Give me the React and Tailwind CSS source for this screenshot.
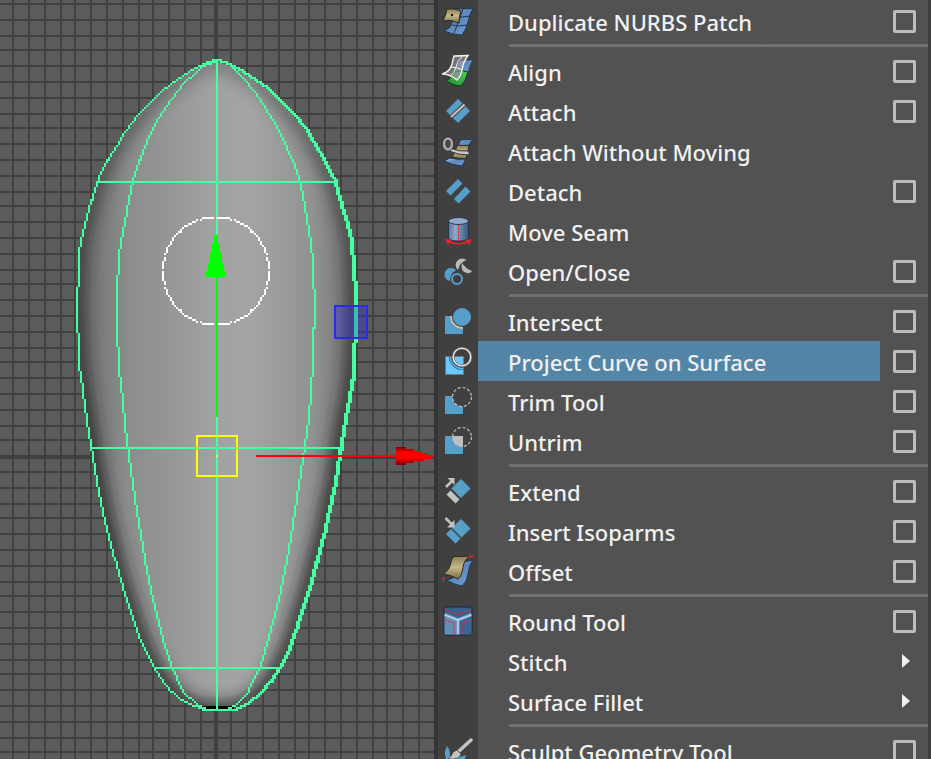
import React from "react";

const BLUE = "#559fc9";
const GREY = "#b9b9b9";
const WIRE = "#45ffa3";
const CELL = 2;

const LEFT_EDGE = [[216, 61], [210, 62], [200, 66], [190, 71], [182, 77], [170, 85], [160, 93], [148, 105], [139, 115], [125, 133], [118, 144], [108, 160], [98, 181], [92, 200], [85, 225], [81, 240], [79, 257], [78, 286], [77, 310], [78, 335], [79, 365], [82, 385], [86, 415], [91, 447], [95, 470], [100, 498], [107, 530], [115, 560], [122, 585], [131, 613], [139, 636], [146, 652], [154, 668], [162, 680], [171, 692], [180, 700], [192, 706], [202, 710], [216, 710]];
const RIGHT_EDGE = [[216, 61], [222, 63], [232, 67], [242, 72], [255, 81], [271, 92], [292, 114], [306, 131], [320, 155], [334, 181], [340, 203], [347, 225], [351, 242], [353, 270], [355, 297], [355, 325], [353, 360], [352, 380], [348, 403], [343, 430], [340, 450], [335, 483], [330, 504], [324, 532], [316, 562], [310, 585], [303, 606], [296, 628], [288, 650], [279, 668], [270, 682], [261, 693], [247, 705], [235, 710], [216, 710]];
const LEFT_ISO = [[216, 61], [208, 65], [200, 68], [190, 78], [180, 89], [167, 107], [155, 125], [147, 142], [140, 160], [133, 181], [129, 200], [123, 232], [119, 257], [117, 295], [117, 325], [119, 370], [122, 395], [125, 425], [128, 450], [131, 470], [135, 498], [140, 530], [145, 560], [153, 600], [163, 640], [172, 668], [183, 693], [196, 705], [206, 710]];
const RIGHT_ISO = [[216, 61], [226, 64], [232, 67], [243, 78], [255, 92], [273, 120], [281, 134], [292, 160], [300, 183], [304, 203], [309, 230], [312, 254], [314, 290], [314, 328], [312, 377], [309, 420], [305, 447], [301, 473], [297, 498], [292, 530], [287, 560], [279, 600], [268, 640], [260, 668], [248, 693], [237, 705], [228, 710]];
const RING = Array.from({ length: 73 }, (_, i) => {
  const a = (i * Math.PI) / 36;
  return [216 + 53 * Math.cos(a), 272 + 54 * Math.sin(a)];
});

// Rasterises a polyline on the viewport's coarse cell lattice.
function cells(points, width = CELL) {
  let d = "";
  for (let i = 1; i < points.length; i++) {
    const [x0, y0] = points[i - 1].map((v) => (v - 1) / CELL);
    const [x1, y1] = points[i].map((v) => (v - 1) / CELL);
    const n = Math.max(1, Math.round(Math.max(Math.abs(x1 - x0), Math.abs(y1 - y0))));
    for (let k = 0; k <= n; k++) {
      const x = Math.round(x0 + ((x1 - x0) * k) / n) * CELL;
      const y = Math.round(y0 + ((y1 - y0) * k) / n) * CELL - 1;
      d += `M${x} ${y}h${width}v${CELL}h${-width}z`;
    }
  }
  return d;
}

function gridPath() {
  let d = "";
  for (let i = -13; i <= 60; i++) {
    if (i !== 0) d += `M${2 * Math.floor((216.1 + 15.6 * i) / 2)} 0h2v1600h-2z`;
  }
  for (let j = 0; j <= 100; j++) {
    d += `M0 ${2 * Math.floor((5 + 15.6 * j) / 2) - 1}h1200v2h-1200z`;
  }
  return d;
}

const BODY = "M" + [...LEFT_EDGE, ...[...RIGHT_EDGE].reverse()].map((p) => p.join(" ")).join("L") + "Z";

function Viewport() {
  return (
    <svg viewBox="0 0 434 759" preserveAspectRatio="xMinYMin slice" className="block size-full" role="img" aria-label="NURBS surface in the front view">
      <defs>
        <linearGradient id="body" gradientUnits="userSpaceOnUse" x1="77" x2="356" y1="0" y2="0">
          <stop offset="0" stopColor="#6c6c6c" />
          <stop offset="0.180" stopColor="#8c8c8c" />
          <stop offset="0.5" stopColor="#a2a2a2" />
          <stop offset="0.62" stopColor="#a4a4a4" />
          <stop offset="0.84" stopColor="#929292" />
          <stop offset="1" stopColor="#747474" />
        </linearGradient>
        <linearGradient id="cone" x1="0" x2="0" y1="0" y2="1">
          <stop offset="0" stopColor="#7a0000" />
          <stop offset="0.3" stopColor="#f00" />
          <stop offset="0.6" stopColor="#f00" />
          <stop offset="1" stopColor="#700" />
        </linearGradient>
        <linearGradient id="fade" x1="0" x2="0" y1="0" y2="1">
          <stop offset="0" stopColor="#333" />
          <stop offset="0.2" stopColor="#888" />
          <stop offset="0.6" stopColor="#eee" />
        </linearGradient>
        <mask id="fadeMask" maskUnits="userSpaceOnUse" x="0" y="0" width="434" height="759">
          <rect width="434" height="759" fill="url(#fade)" />
        </mask>
        <clipPath id="bodyClip"><path d={BODY} /></clipPath>
        <filter id="soft" filterUnits="userSpaceOnUse" x="0" y="0" width="434" height="759"><feGaussianBlur stdDeviation="8" /></filter>
      </defs>
      <rect width="1200" height="1600" fill="#5b5b5b" />
      <g shapeRendering="crispEdges">
        <path d={gridPath()} fill="#414141" />
        <path d="M214 0h4v1600h-4zM0 455h1200v4h-1200z" fill="#404040" />
      </g>
      <path d={BODY} fill="url(#body)" />
      <g clipPath="url(#bodyClip)">
        <g mask="url(#fadeMask)">
          <path d={BODY} fill="none" stroke="#202020" strokeWidth="15" filter="url(#soft)" />
        </g>
        <path d="M200 706h34v4h-34z" fill="#000" />
      </g>
      <g shapeRendering="crispEdges">
        <path d={cells(LEFT_EDGE)} fill={WIRE} />
        <path d={cells(RIGHT_EDGE, 4)} fill={WIRE} />
        <path d={cells(LEFT_ISO)} fill={WIRE} />
        <path d={cells(RIGHT_ISO)} fill={WIRE} />
        <path d="M216 61h2v650h-2zM97 181h238v2H97zM91 447h251v2H91zM154 667h126v2H154z" fill={WIRE} />
        <path d={cells(RING)} fill="#fff" />
        <path d="M216 277h2v140h-2zM214 235h4v8h2v10h2v10h2v8h2v6h-20v-6h2v-8h2v-10h2v-10h2z" fill="#0f0" />
        <rect x="335" y="306" width="32" height="32" fill="#2222ff" fillOpacity="0.3" stroke="#2a2aee" strokeWidth="2" />
        <rect x="197" y="436" width="40" height="40" fill="none" stroke="#ff0" strokeWidth="2" />
        <rect x="216" y="455" width="2" height="2" fill="#ff0" />
        <path d="M256 455h142v2H256z" fill="#f00" />
        <path d="M396 447h10v2h8v2h8v2h6v2h7v2h-3v2h-8v2h-10v2h-8v2h-10z" fill="url(#cone)" />
      </g>
    </svg>
  );
}

const art = {
  duplicate: (
    <>
      <path d="M12 4Q22 4 31 3.500Q27 10 26 17Q24 25 20 30Q11 30 2 26Q8 24 10 18Z" fill="url(#sky)" stroke="#22374d" />
      <path d="M12 13Q20 12 28 11M10 20Q17 22 25 20M21 4Q18 14 12 28" fill="none" stroke="#22374d" />
      <path d="M5 4Q12 3 19 6Q17 11 17 18Q9 14 1 16Q4 10 5 4Z" fill="url(#gold)" stroke="#2c281c" />
      <circle cx="10" cy="10" r="1.200" fill="#17130a" />
    </>
  ),
  align: (
    <>
      <path d="M18 6Q25 5 31 5Q28 9 26 17H12Z" fill="url(#sky)" stroke="#22374d" strokeWidth="0.500" />
      <path d="M12 17Q20 14 26 17Q24 26 19 31Q12 31 4 26Q9 24 12 17Z" fill="url(#leaf)" stroke="#123d18" />
      <path d="M12 1Q18 1 26 0.500Q21 7 20 15Q19 21 15 25Q8 19 0 19Q8 17 10 9Q11 4 12 1Z" fill="#9a9a9a" fillOpacity="0.600" stroke="#f2f2f2" strokeWidth="1.400" />
      <path d="M9 12Q15 12 20 15M20 2Q15 6 14 12Q12 19 8 21" fill="none" stroke="#f2f2f2" />
    </>
  ),
  attach: (
    <>
      <path d="M16 4L28 16L16 28L4 16Z" fill={BLUE} />
      <path d="M8.500 22.500L23 9" stroke="#404040" strokeWidth="4" />
      <path d="M9 22L22.500 9.500" stroke="#c4c4c4" strokeWidth="2.200" />
    </>
  ),
  attachStill: (
    <>
      <path d="M19 5Q25 4.500 31 4Q28 7 27 11L15 11Z" fill="url(#sky)" stroke="#22374d" />
      <path d="M15 10Q21 11 27 10Q26 17 24 24Q17 24 10 22Q14 16 15 10Z" fill="url(#gold)" stroke="#2c281c" />
      <path d="M8 23Q16 25 24 24L20 31Q10 30 2 26Z" fill="url(#sky)" stroke="#22374d" />
      <path d="M8 13Q17 17 27 16V20Q16 20 7 16Z" fill="#c8c8c8" stroke="#353535" />
      <ellipse cx="6" cy="9" rx="4" ry="5.500" fill="none" stroke="#252525" strokeWidth="4" />
      <ellipse cx="6" cy="9" rx="4" ry="5.500" fill="#454545" stroke="#a9a9a9" strokeWidth="2.600" />
    </>
  ),
  detach: <path d="M4 16L16 4L20.500 8.500L8.500 20.500ZM12 24L23.500 11.500L28.500 16.500L16.500 28.500Z" fill={BLUE} />,
  seam: (
    <>
      <path d="M6.500 6V23Q7 26 16.500 26Q26 26 26.500 23V6Z" fill="url(#tube)" stroke="#2b3544" />
      <ellipse cx="16.500" cy="6" rx="10" ry="3.500" fill="#8fabc9" stroke="#2b3544" />
      <path d="M16.500 10V26" stroke="#ef2020" strokeDasharray="2 1" />
      <path d="M6 26Q16.500 32 27 26" fill="none" stroke="#df2530" strokeWidth="1.600" />
      <path d="M3 24L10 25L6 30ZM30 24L23 25L27 30Z" fill="#df2530" />
    </>
  ),
  openClose: (
    <>
      <path d="M16 15A6.500 6.500 0 1 1 24.500 5Q18 7 16 15Z" fill={GREY} />
      <path d="M20 8Q23 13 30 16Q28 19 25 18Q18 17 20 8Z" fill={GREY} />
      <path d="M8 26A6.500 6.500 0 1 1 14 15.500Q8 18 8 26Z" fill={BLUE} />
      <circle cx="15" cy="24" r="5" fill="none" stroke={BLUE} strokeWidth="2" />
    </>
  ),
  intersect: (
    <>
      <path d="M3 11H21V29H3Z" fill={BLUE} />
      <circle cx="20" cy="12" r="12" fill="#3f3f3f" clipPath="url(#corner)" />
      <circle cx="20" cy="12" r="11" fill="none" stroke="#c2c2c2" strokeWidth="2" clipPath="url(#corner)" />
      <circle cx="20" cy="12" r="9" fill={BLUE} />
    </>
  ),
  project: (
    <>
      <path d="M3.500 11.500H21.500V29.500H3.500Z" fill="#6bc9ff" stroke="#777" />
      <circle cx="20" cy="12" r="12.500" fill="none" stroke="#347a9f" strokeWidth="1.200" clipPath="url(#corner)" />
      <circle cx="20" cy="12" r="10.500" fill="none" stroke="#347a9f" strokeWidth="1.200" clipPath="url(#corner)" />
      <circle cx="20" cy="12" r="9" fill="none" stroke="#555" strokeWidth="3" />
      <circle cx="20" cy="12" r="8.800" fill="none" stroke="#e4e4e4" strokeWidth="1.600" />
    </>
  ),
  trim: (
    <>
      <path d="M3 11H10.500A9.500 9.500 0 0 0 21 21.500V29H3Z" fill={BLUE} />
      <circle cx="20" cy="12" r="9.500" fill="none" stroke="#c2c2c2" strokeWidth="1.200" strokeDasharray="3 2" />
    </>
  ),
  untrim: (
    <>
      <path d="M3 11H10.500A9.500 9.500 0 0 0 21 21.500V29H3Z" fill={BLUE} />
      <path d="M10.500 11H21V21.500A9.500 9.500 0 0 1 10.500 11Z" fill="#bebebe" />
      <circle cx="20" cy="12" r="9.500" fill="none" stroke="#c2c2c2" strokeWidth="1.200" strokeDasharray="3 2" />
    </>
  ),
  extend: (
    <>
      <path d="M19 4L28.500 13.500L19 23L9.500 13.500Z" fill={BLUE} />
      <path d="M4.500 19.500L8.500 15.500L17.500 24.500L13.500 28.500Z" fill="#c3c3c3" />
      <path d="M4 12L10.500 5.500" stroke="#c3c3c3" strokeWidth="2.500" />
      <path d="M5.500 3H12.500V10Z" fill="#c3c3c3" />
    </>
  ),
  insert: (
    <>
      <path d="M19 4L28.500 13.500L19.500 22.500L10 13Z" fill={BLUE} />
      <path d="M9 14L18.500 23.500L13.500 28.500L4 19Z" fill={BLUE} />
      <path d="M3.500 3L10 9.500" stroke="#c3c3c3" strokeWidth="2.500" />
      <path d="M12.500 5V12.500H5Z" fill="#c3c3c3" />
    </>
  ),
  offset: (
    <>
      <path d="M20 7Q26 6 31 5Q27 10 26 19Q25 27 20 31Q13 30 4 25Q14 24 17 14Z" fill="url(#sky)" stroke="#22374d" />
      <path d="M12 1.500Q20 1.500 28 1Q22 5 21 12Q20 21 16 24Q9 20 1 19Q8 15 9 7Q10 3 12 1.500Z" fill="url(#gold)" stroke="#2c281c" />
      <path d="M32 1.500H27M29 0L27 1.500L29 3M1.500 27V22M0 24L1.500 22L3 24" fill="none" stroke="#df2530" />
    </>
  ),
  round: (
    <>
      <rect x="2" y="2" width="28" height="28" rx="2" fill="#35618e" stroke="#1d2732" />
      <path d="M2.500 10L16 14.500V29.500H2.500Z" fill="#668db7" />
      <path d="M29.500 10L16 14.500V29.500H29.500Z" fill="#3c6591" />
      <path d="M2.500 9.500L16 15L29.500 9.500M16 15V29.500" fill="none" stroke="#7fa9d0" strokeWidth="3" />
      <path d="M3 10L16 15L29 10M16 15V29" fill="none" stroke="#c9e2f6" />
      <path d="M3 5L16 9.500L29 5M3 15L12 18V29M29 15L20 18V29" fill="none" stroke="#ee2230" strokeWidth="1.200" strokeDasharray="2 1" />
    </>
  ),
  sculpt: (
    <>
      <path d="M5 11Q8 14 8 21L12 24L24 20Q22 29 14 30Q2 29 3 16Z" fill={BLUE} />
      <path d="M17 16L29 5" stroke="#c3c3c3" strokeWidth="3.500" strokeLinecap="round" />
      <path d="M15 15L19 19Q18 25 6 24Q10 21 11 17Z" fill="#c3c3c3" stroke="#404040" strokeWidth="0.800" />
    </>
  ),
};

function IconDefs() {
  return (
    <svg className="absolute size-0" aria-hidden="true">
      <defs>
        <linearGradient id="sky" x1="0" x2="1" y1="0" y2="1">
          <stop offset="0" stopColor="#b4d0f2" /><stop offset="0.450" stopColor="#5c88bb" /><stop offset="1" stopColor="#6fa2dc" />
        </linearGradient>
        <linearGradient id="gold" x1="0" x2="0" y1="0" y2="1">
          <stop offset="0" stopColor="#8b7e57" /><stop offset="0.500" stopColor="#c4b788" /><stop offset="1" stopColor="#7a6e4a" />
        </linearGradient>
        <linearGradient id="leaf" x1="0" x2="1" y1="1" y2="0">
          <stop offset="0" stopColor="#1e8b2c" /><stop offset="1" stopColor="#56c865" />
        </linearGradient>
        <linearGradient id="tube" x1="0" x2="1" y1="0" y2="0">
          <stop offset="0" stopColor="#55779f" /><stop offset="0.350" stopColor="#8aa9cd" /><stop offset="1" stopColor="#34557e" />
        </linearGradient>
        <clipPath id="corner"><path d="M3 11H21V29H3Z" /></clipPath>
      </defs>
    </svg>
  );
}

const GROUPS = [
  [{ label: "Duplicate NURBS Patch", icon: "duplicate", options: true }],
  [
    { label: "Align", icon: "align", options: true },
    { label: "Attach", icon: "attach", options: true },
    { label: "Attach Without Moving", icon: "attachStill" },
    { label: "Detach", icon: "detach", options: true },
    { label: "Move Seam", icon: "seam" },
    { label: "Open/Close", icon: "openClose", options: true },
  ],
  [
    { label: "Intersect", icon: "intersect", options: true },
    { label: "Project Curve on Surface", icon: "project", options: true, active: true },
    { label: "Trim Tool", icon: "trim", options: true },
    { label: "Untrim", icon: "untrim", options: true },
  ],
  [
    { label: "Extend", icon: "extend", options: true },
    { label: "Insert Isoparms", icon: "insert", options: true },
    { label: "Offset", icon: "offset", options: true },
  ],
  [
    { label: "Round Tool", icon: "round", options: true },
    { label: "Stitch", submenu: true },
    { label: "Surface Fillet", submenu: true },
  ],
  [{ label: "Sculpt Geometry Tool", icon: "sculpt", options: true }],
];

function MenuRow({ label, icon, options, submenu, active }) {
  return (
    <li className="flex h-10 items-center">
      <span className="flex w-10 shrink-0 justify-center">
        {icon && <svg viewBox="0 0 32 32" className="size-8 overflow-visible" aria-hidden="true">{art[icon]}</svg>}
      </span>
      <button type="button" className={`h-10 min-w-0 flex-1 whitespace-nowrap pt-0.5 pl-[30px] text-left ${active ? "bg-[#5285a6]" : ""}`}>
        {label}
      </button>
      <span className="flex w-12 shrink-0 items-center justify-center">
        {options && (
          <input type="checkbox" aria-label={`${label} options`} className="size-[23px] appearance-none rounded-[2px] border-3 border-[#bdbdbd]" />
        )}
        {submenu && (
          <svg viewBox="0 0 8 14" className="ml-1 h-3.5 w-2" aria-hidden="true"><path d="M0 0L8 7L0 14Z" fill="#f0f0f0" /></svg>
        )}
      </span>
    </li>
  );
}

export default function App() {
  return (
    <main className="flex h-screen overflow-hidden bg-[#5b5b5b] font-['Noto_Sans','Open_Sans',sans-serif] text-[22px] leading-8 font-medium text-[#f0f0f0]">
      <IconDefs />
      <section className="min-w-0 flex-1">
        <Viewport />
      </section>
      <nav aria-label="Surfaces" className="w-[497px] shrink-0 border-r-3 border-l-4 border-r-[#404040] border-l-[#353535] bg-linear-to-r from-[#404040] from-[40px] to-[#525252] to-[40px] pt-px">
        {GROUPS.map((group, i) => (
          <React.Fragment key={group[0].label}>
            {i > 0 && <hr className="my-[3px] mr-0 ml-[71px] h-1 border-0 border-t-3 border-[#707070]" />}
            <ul>
              {group.map((item) => <MenuRow key={item.label} {...item} />)}
            </ul>
          </React.Fragment>
        ))}
      </nav>
    </main>
  );
}
